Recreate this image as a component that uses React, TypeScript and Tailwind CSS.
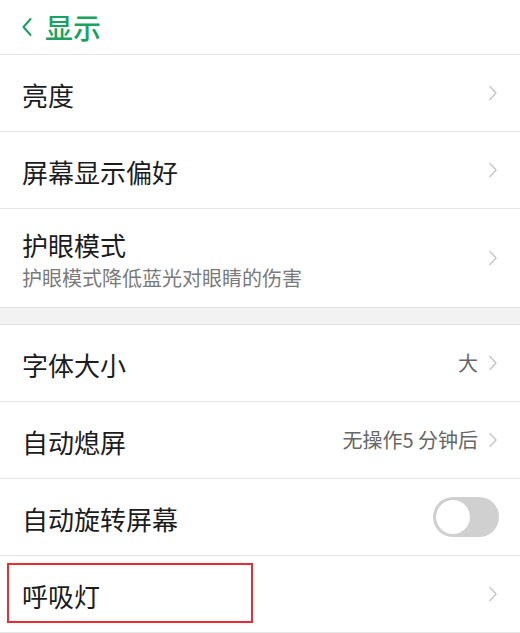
import React from "react";

const font = { fontFamily: '"Noto Sans CJK SC", "Noto Sans", sans-serif' };

function Chevron() {
  return (
    <svg width="10" height="16" viewBox="0 0 10 16" className="shrink-0">
      <path d="M2 1.5 L8 8 L2 14.5" fill="none" stroke="#c4c4c4" strokeWidth="1.4" strokeLinecap="round" strokeLinejoin="round" />
    </svg>
  );
}

function Row({ title, value, children }: { title: string; value?: string; children?: React.ReactNode }) {
  return (
    <div className="flex items-center justify-between h-[77px] border-b border-[#e6e6e6] bg-white pl-[22px] pr-[22px]">
      <span className="text-[26px] leading-none text-[#1c1c1c] pt-[3px]">{title}</span>
      <div className="flex items-center gap-[10px]">
        {value && <span className="text-[20px] leading-none text-[#666666]">{value}</span>}
        {children ?? <Chevron />}
      </div>
    </div>
  );
}

export default function App() {
  return (
    <div className="w-[520px] h-[633px] bg-white overflow-hidden" style={font}>
      <div className="flex items-center h-[55px] border-b border-[#e3e3e3] pl-[21px] gap-[12px]">
        <svg width="12" height="20" viewBox="0 0 12 20">
          <path d="M9.5 2 L2.5 10 L9.5 18" fill="none" stroke="#1aa261" strokeWidth="2" strokeLinecap="round" strokeLinejoin="round" />
        </svg>
        <span className="text-[28px] leading-none text-[#1aa261] font-medium">显示</span>
      </div>
      <Row title="亮度" />
      <Row title="屏幕显示偏好" />
      <div className="flex items-center justify-between h-[99px] border-b border-[#e6e6e6] bg-white pl-[22px] pr-[22px]">
        <div className="flex flex-col gap-[10px] pt-[4px]">
          <span className="text-[26px] leading-none text-[#1c1c1c]">护眼模式</span>
          <span className="text-[20px] leading-none text-[#7a7a7a]">护眼模式降低蓝光对眼睛的伤害</span>
        </div>
        <Chevron />
      </div>
      <div className="h-[17px] bg-[#f2f2f2] border-b border-[#e6e6e6]" />
      <Row title="字体大小" value="大" />
      <Row title="自动熄屏" value="无操作5 分钟后" />
      <Row title="自动旋转屏幕">
        <div className="flex items-center w-[66px] h-[40px] rounded-full bg-[#d0d0d0] p-[1px] mr-[-1px]">
          <div className="w-[38px] h-[38px] rounded-full bg-white border-[2px] border-[#cfcfcf]" />
        </div>
      </Row>
      <div className="relative">
        <Row title="呼吸灯" />
        <div className="absolute left-[7px] top-[7px] w-[246px] h-[60px] border-[2px] border-[#ea2b31]" />
      </div>
    </div>
  );
}
